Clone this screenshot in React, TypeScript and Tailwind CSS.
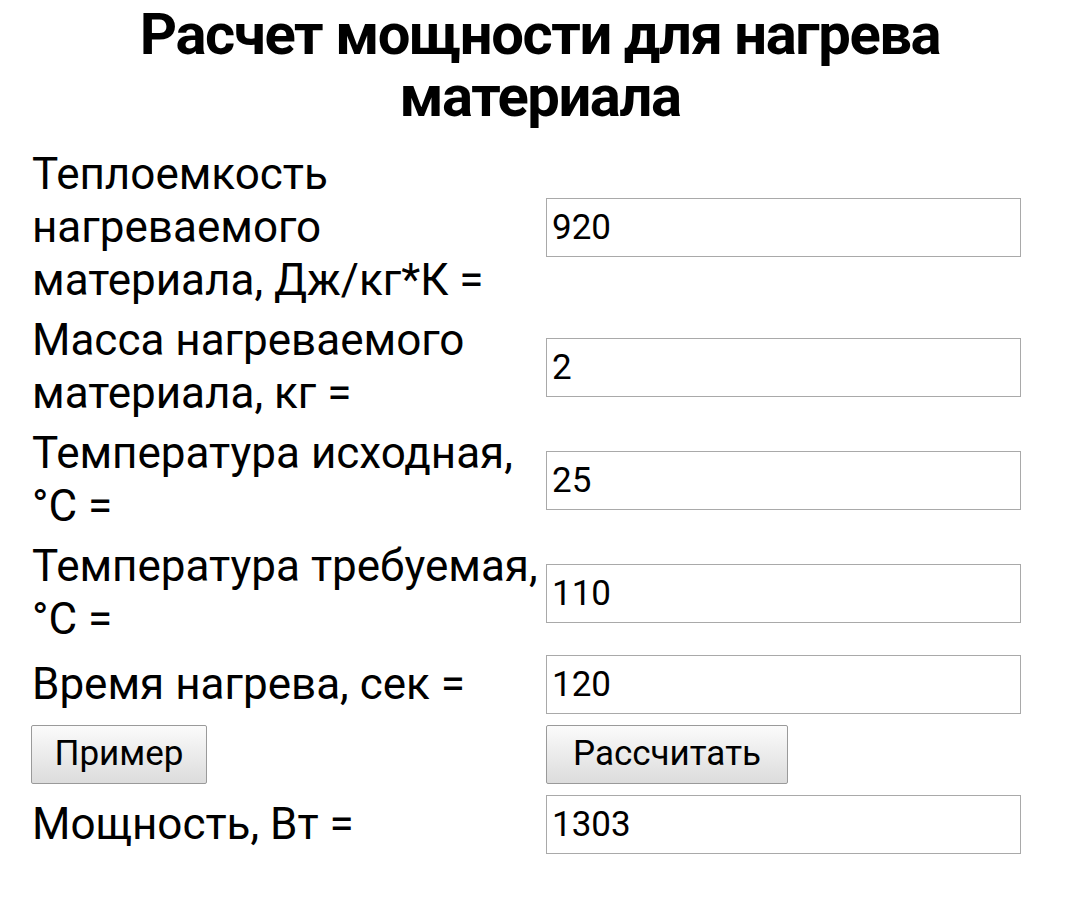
const labelFont = { fontFamily: 'Roboto, "Noto Sans", sans-serif' }

interface RowProps {
  label: string
  value: string
}

const FieldRow = ({ label, value }: RowProps) => (
  <>
    <div className="text-[44px] leading-[53px] text-black pr-[4px] flex items-center">{label}</div>
    <div className="flex items-center">
      <input
        readOnly
        value={value}
        className="w-[475px] h-[59px] my-[2px] border border-[#a9a9a9] bg-white pl-[5px] text-[35px] text-black outline-none"
      />
    </div>
  </>
)

const PlainButton = ({ children, width }: { children: string; width: string }) => (
  <button
    className={`${width} h-[59px] my-[2px] rounded-[2px] border border-[#9a9a9a] bg-gradient-to-b from-[#fbfbfb] to-[#dcdcdc] text-[35px] text-black`}
  >
    {children}
  </button>
)

export default function App() {
  return (
    <div className="w-[1080px] min-h-[901px] bg-white" style={labelFont}>
      <h1 className="text-center font-bold text-[58px] leading-[62px] pt-[3px] text-black tracking-tight">
        Расчет мощности для нагрева
        <br />
        материала
      </h1>
      <div className="grid grid-cols-[514px_1fr] gap-y-[7px] pl-[32px] pt-[21px]">
        <FieldRow label="Теплоемкость нагреваемого материала, Дж/кг*К =" value="920" />
        <FieldRow label="Масса нагреваемого материала, кг =" value="2" />
        <FieldRow label="Температура исходная, °С =" value="25" />
        <FieldRow label="Температура требуемая, °С =" value="110" />
        <FieldRow label="Время нагрева, сек =" value="120" />
        <div className="flex items-center -ml-[1px]">
          <PlainButton width="w-[176px]">Пример</PlainButton>
        </div>
        <div className="flex items-center">
          <PlainButton width="w-[242px]">Рассчитать</PlainButton>
        </div>
        <FieldRow label="Мощность, Вт =" value="1303" />
      </div>
    </div>
  )
}
